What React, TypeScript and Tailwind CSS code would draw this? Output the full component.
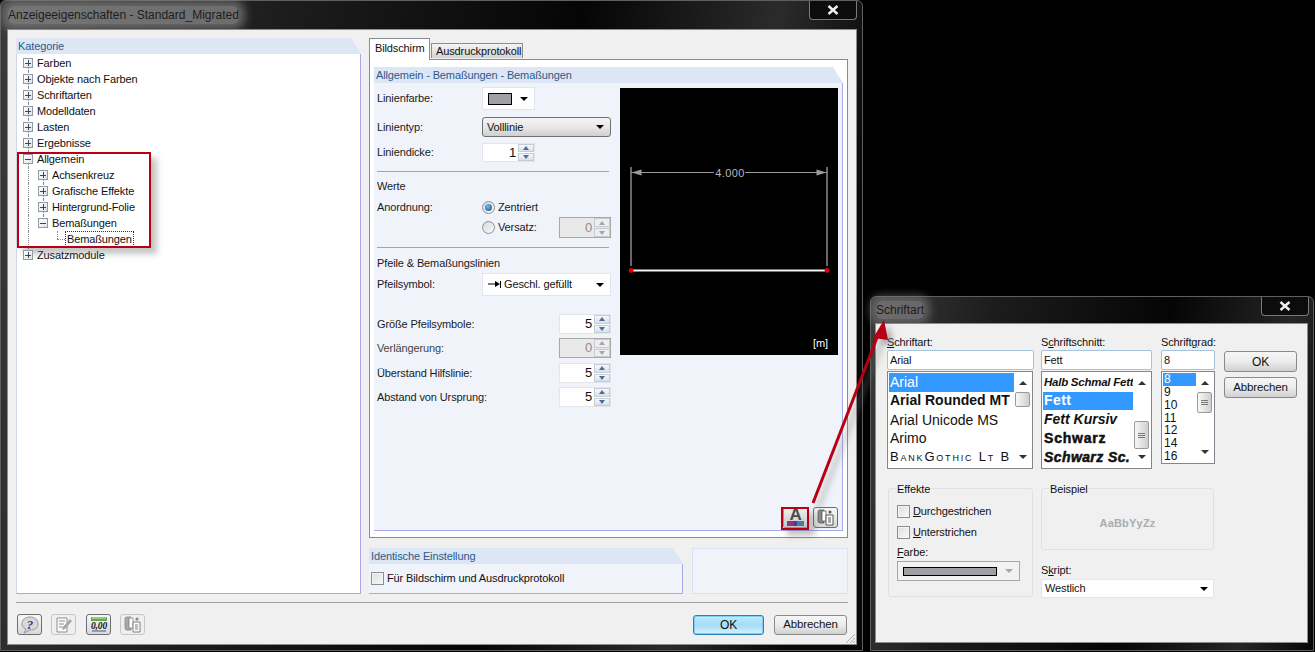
const Plus = ({ open }: { open?: boolean }) => (
  <span className="relative z-10 flex h-[10px] w-[10px] items-center justify-center border border-[#8f9aa8] bg-[linear-gradient(135deg,#ffffff,#dfe3ea)]">
    <span className="absolute h-px w-[6px] bg-[#33475f]" />
    {!open && <span className="absolute h-[6px] w-px bg-[#33475f]" />}
  </span>
);

// one tree row, guide cells are drawn per row
const TreeRow = ({
  label,
  level = 1,
  open,
  first,
  last,
}: {
  label: string;
  level?: number;
  open?: boolean;
  first?: boolean;
  last?: boolean;
}) => (
  <div className="flex h-4 items-center pl-[6px]">
    {level === 2 && <span className="relative h-4 w-[15px] shrink-0"><i className="absolute left-[5px] top-0 h-4 border-l border-dotted border-[#8a8a8a]" /></span>}
    <span className="relative flex h-4 w-[14px] shrink-0 items-center">
      <i className={`absolute left-[5px] border-l border-dotted border-[#8a8a8a] ${first ? "top-2 h-2" : last ? "top-0 h-2" : "top-0 h-4"}`} />
      <Plus open={open} />
    </span>
    <span className="whitespace-nowrap text-[#111]">{label}</span>
  </div>
);

const LeafRow = ({ label }: { label: string }) => (
  <div className="flex h-4 items-center pl-[6px]">
    <span className="relative h-4 w-[15px] shrink-0"><i className="absolute left-[5px] top-0 h-4 border-l border-dotted border-[#8a8a8a]" /></span>
    <span className="relative h-4 w-[21px] shrink-0">
      <i className="absolute left-[19px] top-0 h-2 border-l border-dotted border-[#8a8a8a]" />
      <i className="absolute left-[19px] top-2 w-[8px] border-t border-dotted border-[#8a8a8a]" />
    </span>
    <span className="ml-[6px] border border-dotted border-[#333] px-[1px] leading-[14px] text-[#111]">{label}</span>
  </div>
);

const SpinArrows = ({ disabled }: { disabled?: boolean }) => {
  const c = disabled ? "border-b-[#a8a8a8]" : "border-b-[#4a6d9c]";
  const d = disabled ? "border-t-[#a8a8a8]" : "border-t-[#4a6d9c]";
  return (
    <span className="flex w-[16px] shrink-0 flex-col gap-px">
      <span className={`flex flex-1 items-center justify-center border border-[#c6ccd4] ${disabled ? "bg-[#eeeeee]" : "bg-[linear-gradient(#f6f8fb,#d8e0ea)]"}`}>
        <i className={`h-0 w-0 border-x-[3px] border-b-[4px] border-x-transparent ${c}`} />
      </span>
      <span className={`flex flex-1 items-center justify-center border border-[#c6ccd4] ${disabled ? "bg-[#eeeeee]" : "bg-[linear-gradient(#f6f8fb,#d8e0ea)]"}`}>
        <i className={`h-0 w-0 border-x-[3px] border-t-[4px] border-x-transparent ${d}`} />
      </span>
    </span>
  );
};

const Spin = ({ value, disabled, w = "w-[52px]" }: { value: string; disabled?: boolean; w?: string }) => (
  <span className={`flex h-full border ${w} ${disabled ? "border-[#a8a8a8] bg-[#e9e9e9] text-[#8c8c8c]" : "border-[#e2e6ec] bg-white text-[#111]"}`}>
    <span className="flex flex-1 items-center justify-end pr-[2px] text-[13px]">{value}</span>
    <SpinArrows disabled={disabled} />
  </span>
);

const DropArrow = ({ color = "border-t-black" }: { color?: string }) => (
  <i className={`h-0 w-0 border-x-[4px] border-t-[4px] border-x-transparent ${color}`} />
);

const FormRow = ({ label, className, children }: { label: string; className: string; children?: React.ReactNode }) => (
  <div className={`flex items-center justify-between ${className}`}>
    <span className="whitespace-nowrap text-[#1a1a1a]">{label}</span>
    {children}
  </div>
);

const Radio = ({ on }: { on?: boolean }) => (
  <span className="flex h-[13px] w-[13px] items-center justify-center rounded-full border border-[#8a8f96] bg-[linear-gradient(135deg,#d8d8d8,#fafafa)]">
    {on && <span className="h-[7px] w-[7px] rounded-full bg-[radial-gradient(circle_at_40%_35%,#6cc0f0,#0b4f8c)]" />}
  </span>
);

const Check = () => (
  <span className="h-[13px] w-[13px] shrink-0 border border-[#8a8f96] bg-[linear-gradient(135deg,#dcdcdc,#fbfbfb)] shadow-[inset_0_0_0_1px_#f2f2f2]" />
);

const SectionHead = ({ title }: { title: string }) => (
  <div className="flex h-4 items-center bg-[#dce6f4] pl-[2px] text-[#2d5b8a] [clip-path:polygon(0_0,calc(100%-10px)_0,100%_100%,0_100%)]">
    {title}
  </div>
);

const ToolBtn = ({ dim, children }: { dim?: boolean; children: React.ReactNode }) => (
  <span className={`flex h-[21px] w-[25px] items-center justify-center rounded-[3px] border ${dim ? "border-[#b5b5b5] bg-[#efefef] opacity-70" : "border-[#6d6d6d] bg-[linear-gradient(#f8f8f8,#d8d8d8)]"}`}>
    {children}
  </span>
);

const CopyIcon = () => (
  <svg width="19" height="17" viewBox="0 0 19 17">
    <path d="M2 3q0-2 2-2h4v2H6v9h2v2H4q-2 0-2-2z" fill="#8c8c8c" stroke="#555" strokeWidth="0.8" />
    <path d="M6 2h4v10H6z" fill="#fff" stroke="#666" strokeWidth="0.8" />
    <path d="M10 6h7v10h-7z" fill="#fff" stroke="#555" />
    <path d="M12 9h3M12 11h3M12 13h3" stroke="#555" />
    <circle cx="14" cy="3" r="1.5" fill="#555" />
  </svg>
);

const Scrollbar = ({ thumb, lines = false, top }: { thumb: string; lines?: boolean; top: string }) => (
  <div className="relative flex w-[17px] shrink-0 flex-col items-center justify-between py-[8px]">
    <i className="h-0 w-0 border-x-[4px] border-b-[4px] border-x-transparent border-b-[#333]" />
    <span className={`absolute left-[1px] flex w-[15px] flex-col items-center justify-center gap-px rounded-[2px] border border-[#9a9a9a] bg-[linear-gradient(90deg,#f8f8f8,#cfcfcf)] ${top} ${thumb}`}>
      {lines && <><i className="h-px w-[7px] bg-[#777]" /><i className="h-px w-[7px] bg-[#777]" /><i className="h-px w-[7px] bg-[#777]" /></>}
    </span>
    <i className="h-0 w-0 border-x-[4px] border-t-[4px] border-x-transparent border-t-[#333]" />
  </div>
);

const CloseBtn = ({ className }: { className: string }) => (
  <span className={`absolute top-0 flex h-[19px] w-[48px] items-center justify-center rounded-b-[4px] border border-t-0 border-[#7a7a7a] bg-[#0c0c0c] ${className}`}>
    <svg width="12" height="10" viewBox="0 0 12 10">
      <path d="M1.5 1l9 8M10.5 1l-9 8" stroke="#f0f0f0" strokeWidth="2.4" />
    </svg>
  </span>
);

const DlgBtn = ({ label, primary, className }: { label: string; primary?: boolean; className: string }) => (
  <span className={`flex items-center justify-center rounded-[3px] border text-[#111] ${primary ? "border-[#2b7fb8] bg-[linear-gradient(#bfeafb,#a5dcf6_50%,#d8f2fd)] shadow-[inset_0_0_0_1px_#7fd0f3]" : "border-[#8a8a8a] bg-[linear-gradient(#f6f6f6,#ececec_50%,#d0d0d0)]"} ${className}`}>
    {label}
  </span>
);

const MainWindow = () => (
  <div className="absolute left-0 top-0 flex h-[651px] w-[863px] flex-col rounded-t-[6px] border border-[#5f5f5f] bg-[linear-gradient(100deg,#3a3a3a_0%,#1c1c1c_30%,#050505_60%,#2b2b2b_80%,#080808_92%)]">
    <div className="flex h-[28px] shrink-0 items-center pl-[7px]">
      <span className="rounded-[6px] bg-[#8f8f8f]/70 text-[12px] tracking-normal text-[#1d1d1d] shadow-[0_0_8px_6px_rgba(143,143,143,0.6)]">Anzeigeeigenschaften - Standard_Migrated</span>
    </div>
    <CloseBtn className="right-[5px]" />
    <div className="relative ml-[6px] flex h-[616px] w-[850px] flex-col border border-[#8c8c8c] bg-[#f0f0f0] px-[8px] pt-[8px]">
      <div className="flex h-[556px] gap-[8px]">
        {/* Kategorie tree */}
        <div className="flex w-[345px] flex-col">
          <SectionHead title="Kategorie" />
          <div className="flex-1 border-b border-l border-r border-b-[#a8a8ec] border-l-[#d0d8e8] border-r-[#a8a8ec] bg-white pt-px">
            <TreeRow label="Farben" first />
            <TreeRow label="Objekte nach Farben" />
            <TreeRow label="Schriftarten" />
            <TreeRow label="Modelldaten" />
            <TreeRow label="Lasten" />
            <TreeRow label="Ergebnisse" />
            <TreeRow label="Allgemein" open />
            <TreeRow label="Achsenkreuz" level={2} first />
            <TreeRow label="Grafische Effekte" level={2} />
            <TreeRow label="Hintergrund-Folie" level={2} />
            <TreeRow label="Bemaßungen" level={2} open last />
            <LeafRow label="Bemaßungen" />
            <TreeRow label="Zusatzmodule" last />
          </div>
        </div>

        <div className="flex w-[479px] flex-col">
          {/* tabs */}
          <div className="relative z-10 flex h-[21px] items-end">
            <span className="flex h-[22px] w-[61px] translate-y-px items-start border border-b-0 border-[#898c95] bg-white pl-[5px] pt-px text-[#111]">Bildschirm</span>
            <span className="mb-px ml-px flex h-[15px] w-[92px] items-center border border-b-0 border-[#898c95] bg-[linear-gradient(#f4f4f4,#d4d4d4)] pl-[4px] text-[#111]">Ausdruckprotokoll</span>
          </div>
          <div className="flex h-[479px] flex-col border border-[#898c95] bg-white px-[4px] pb-[6px] pt-[7px]">
            <SectionHead title="Allgemein - Bemaßungen - Bemaßungen" />
            <div className="flex flex-1 flex-col border-b border-r border-[#a8a8ec] bg-[#f0f4fa]">
              <div className="flex flex-1 gap-[9px] pl-[3px] pt-[4px]">
                <div className="flex w-[234px] flex-col">
                  <FormRow label="Linienfarbe:" className="h-[23px] pr-[76px]">
                    <span className="flex h-full w-[53px] items-center justify-between border border-[#e2e6ec] bg-white pl-[5px] pr-[6px]">
                      <i className="h-[12px] w-[24px] border border-black bg-[#a0a0a4]" />
                      <DropArrow />
                    </span>
                  </FormRow>
                  <FormRow label="Linientyp:" className="mt-[7px] h-[20px]">
                    <span className="flex h-full w-[129px] items-center justify-between rounded-[3px] border border-[#707070] bg-[linear-gradient(#f4f4f4,#e8e8e8_50%,#cfcfcf)] pl-[4px] pr-[6px] text-[#111]">
                      Volllinie
                      <DropArrow />
                    </span>
                  </FormRow>
                  <FormRow label="Liniendicke:" className="mt-[6px] h-[19px] pr-[76px]">
                    <Spin value="1" w="w-[53px]" />
                  </FormRow>
                  <div className="mt-[9px] h-px w-[232px] bg-[#a3a3a3]" />
                  <div className="mt-[6px] flex h-4 items-center text-[#1a1a1a]">Werte</div>
                  <div className="mt-[5px] flex h-4 items-center text-[#1a1a1a]">
                    <span className="w-[105px]">Anordnung:</span>
                    <Radio on />
                    <span className="ml-[3px]">Zentriert</span>
                  </div>
                  <div className="mt-[2px] flex h-[21px] items-center text-[#1a1a1a]">
                    <span className="w-[105px]" />
                    <Radio />
                    <span className="ml-[3px] flex-1">Versatz:</span>
                    <Spin value="0" disabled />
                  </div>
                  <div className="mt-[9px] h-px w-[232px] bg-[#a3a3a3]" />
                  <div className="mt-[7px] flex h-4 items-center text-[#1a1a1a]">Pfeile &amp; Bemaßungslinien</div>
                  <FormRow label="Pfeilsymbol:" className="mt-[2px] h-[23px]">
                    <span className="flex h-full w-[129px] items-center justify-between border border-[#e2e6ec] bg-white pl-[5px] pr-[6px] text-[#111]">
                      <span className="flex items-center gap-[2px]">
                        <svg width="14" height="9" viewBox="0 0 14 9"><path d="M0 4h8" stroke="#000" /><path d="M7 1l5 3-5 3z" fill="#000" /><path d="M12.5 1v7" stroke="#000" /></svg>
                        Geschl. gefüllt
                      </span>
                      <DropArrow />
                    </span>
                  </FormRow>
                  <FormRow label="Größe Pfeilsymbole:" className="mt-[18px] h-[20px]"><Spin value="5" /></FormRow>
                  <FormRow label="Verlängerung:" className="mt-[4px] h-[20px] [&>span:first-child]:text-[#444]"><Spin value="0" disabled /></FormRow>
                  <FormRow label="Überstand Hilfslinie:" className="mt-[5px] h-[20px]"><Spin value="5" /></FormRow>
                  <FormRow label="Abstand von Ursprung:" className="mt-[4px] h-[20px]"><Spin value="5" /></FormRow>
                </div>
                {/* preview */}
                <svg className="mt-[1px] shrink-0" width="218" height="267" viewBox="0 0 218 267">
                  <rect width="218" height="267" fill="#000" />
                  <path d="M11 79v99M207 79v99" stroke="#8a8a8a" strokeWidth="1.5" />
                  <path d="M11 84.5h83M125 84.5h82" stroke="#9a9a9a" />
                  <path d="M11.5 84.5l10-3v6zM206.5 84.5l-10-3v6z" fill="#9a9a9a" />
                  <text x="110" y="88.5" textAnchor="middle" fill="#b8b8b8" fontSize="11" fontFamily="Liberation Sans" letterSpacing="0.4">4.000</text>
                  <path d="M11 182.5h196" stroke="#f2f2f2" strokeWidth="2" />
                  <circle cx="11" cy="182.5" r="2.4" fill="#e00000" />
                  <circle cx="207" cy="182.5" r="2.4" fill="#e00000" />
                  <text x="193" y="259" fill="#fff" fontSize="11" fontFamily="Liberation Sans">[m]</text>
                </svg>
              </div>
              <div className="flex justify-end gap-[5px] pb-[2px] pr-[4px]">
                <span className="flex h-[21px] w-[25px] flex-col items-center justify-end rounded-[2px] border border-[#35b6e8] bg-[linear-gradient(#f0f0f0,#c8c8c8)] pb-px">
                  <span className="font-['Liberation_Sans'] text-[17px] font-bold leading-[13px] text-[#4c4c4c]">A</span>
                  <span className="flex h-[5px] w-[18px]">
                    <i className="flex-1 bg-[#6a4a8a]" /><i className="flex-1 bg-[#a0306a]" /><i className="flex-1 bg-[#4040a0]" /><i className="flex-1 bg-[#4a7ab0]" /><i className="flex-1 bg-[#3a8a7a]" />
                  </span>
                </span>
                <ToolBtn><CopyIcon /></ToolBtn>
              </div>
            </div>
          </div>
          {/* bottom boxes */}
          <div className="mt-[10px] flex h-[46px] gap-[9px]">
            <div className="flex w-[314px] flex-col">
              <SectionHead title="Identische Einstellung" />
              <div className="flex flex-1 items-center gap-[3px] border-b border-r border-[#a8a8ec] bg-[#f0f4fa] pl-[2px] text-[#111]">
                <Check />
                Für Bildschirm und Ausdruckprotokoll
              </div>
            </div>
            <div className="w-[156px] border border-[#d8e2f5] bg-[#f0f4fa]" />
          </div>
        </div>
      </div>
      <div className="mt-[8px] h-px bg-[#a3a3a3]" />
      <div className="mt-[11px] flex h-[21px] items-center pl-px">
        <ToolBtn>
          <svg width="20" height="18" viewBox="0 0 20 18">
            <path d="M10 1c5 0 8 3 8 7s-3 6-8 6l-6 3 2-4C3 12 2 10 2 8c0-4 3-7 8-7z" fill="#d8d8d8" stroke="#999" />
            <text x="10" y="13" textAnchor="middle" fontSize="13" fontWeight="700" fontStyle="italic" fontFamily="Liberation Serif" fill="#2b3f8c">?</text>
          </svg>
        </ToolBtn>
        <span className="ml-[9px]">
          <ToolBtn dim>
            <svg width="18" height="16" viewBox="0 0 18 16"><path d="M2 1h10v14H2z" fill="#fff" stroke="#666" /><path d="M4 4h6M4 7h5M4 10h4" stroke="#666" /><path d="M15 2l2 2-7 8-3 1 1-3z" fill="#888" /></svg>
          </ToolBtn>
        </span>
        <span className="ml-[10px]">
          <ToolBtn>
            <svg width="18" height="17" viewBox="0 0 18 17">
              <rect x="1" y="1" width="16" height="4" fill="#66a84a" />
              <path d="M3 1v2M5 1v2M7 1v2M9 1v2M11 1v2M13 1v2M15 1v2" stroke="#cfe8c0" />
              <text x="9" y="13" textAnchor="middle" fontSize="9.5" fontWeight="700" fontStyle="italic" fontFamily="Liberation Serif" fill="#111">0,00</text>
              <path d="M2 15h14" stroke="#3a5f9c" />
            </svg>
          </ToolBtn>
        </span>
        <span className="ml-[9px]">
          <ToolBtn dim><CopyIcon /></ToolBtn>
        </span>
        <span className="ml-auto flex gap-[10px] pr-px">
          <DlgBtn label="OK" primary className="h-[20px] w-[71px] text-[12px]" />
          <DlgBtn label="Abbrechen" className="h-[20px] w-[73px] text-[11.5px]" />
        </span>
      </div>
      <svg className="absolute bottom-0 right-0" width="12" height="12" viewBox="0 0 12 12">
        <path d="M11 2L2 11M11 6l-5 5M11 9l-2 2" stroke="#b0b0b0" />
      </svg>
    </div>
  </div>
);

const ListRow = ({ sel, className, children }: { sel?: boolean; className: string; children: React.ReactNode }) => (
  <div className={`flex items-center overflow-hidden whitespace-nowrap ${sel ? "bg-[#3399ff] text-white" : "text-[#111]"} ${className}`}>{children}</div>
);

const Legend = ({ children }: { children: React.ReactNode }) => (
  <span className="absolute left-[7px] top-[-7px] bg-[#f0f0f0] px-px leading-[14px] text-[#111]">{children}</span>
);

const FontInput = ({ value, className }: { value: string; className: string }) => (
  <div className={`flex h-[20px] items-center rounded-[2px] border border-[#a4c4dc] bg-white pl-[2px] text-[#111] ${className}`}>{value}</div>
);

const FontWindow = () => (
  <div className="absolute left-[870px] top-[296px] flex h-[355px] w-[444px] flex-col rounded-t-[6px] border border-[#5f5f5f] bg-[linear-gradient(100deg,#3a3a3a_0%,#1c1c1c_25%,#050505_60%,#262626_85%,#080808)]">
    <div className="flex h-[26px] shrink-0 items-center pl-[5px]">
      <span className="rounded-[6px] bg-[#8f8f8f]/60 text-[12px] tracking-normal text-[#1d1d1d] shadow-[0_0_8px_6px_rgba(143,143,143,0.5)]">Schriftart</span>
    </div>
    <CloseBtn className="right-[4px]" />
    <div className="ml-[4px] flex h-[320px] w-[433px] flex-col border border-[#8c8c8c] bg-[#f0f0f0] pl-[11px] pt-[11px]">
      <div className="flex">
        <div className="w-[147px]">
          <div className="h-[15px] leading-[14px] text-[#111]"><u>S</u>chriftart:</div>
          <FontInput value="Arial" className="w-[147px]" />
          <div className="mt-px flex h-[98px] w-[146px] border border-[#82878f] bg-white p-px font-['Liberation_Sans'] tracking-normal">
            <div className="flex w-[126px] flex-col text-[14px]">
              <ListRow sel className="h-[19px] pl-[1px]">Arial</ListRow>
              <ListRow className="h-[19px] pl-[1px] font-bold">Arial Rounded MT</ListRow>
              <ListRow className="h-[20px] pl-[1px]">Arial Unicode MS</ListRow>
              <ListRow className="h-[18px] pl-[1px]">Arimo</ListRow>
              <ListRow className="h-[20px] pl-[1px] text-[13px] tracking-[1.8px] [font-variant:small-caps]">BankGothic Lt B</ListRow>
            </div>
            <Scrollbar thumb="h-[15px]" top="top-[19px]" />
          </div>
        </div>
        <div className="ml-[7px] w-[112px]">
          <div className="h-[15px] leading-[14px] text-[#111]">S<u>c</u>hriftschnitt:</div>
          <FontInput value="Fett" className="w-[111px]" />
          <div className="mt-px flex h-[98px] w-[111px] border border-[#82878f] bg-white p-px font-['Liberation_Sans'] tracking-normal">
            <div className="flex w-[91px] flex-col text-[14px]">
              <ListRow className="h-[19px] pl-px text-[11.5px] font-bold italic tracking-[-0.25px]">Halb Schmal Fett</ListRow>
              <ListRow sel className="h-[19px] pl-px font-bold tracking-[0.4px]">Fett</ListRow>
              <ListRow className="h-[19px] pl-px font-bold italic">Fett Kursiv</ListRow>
              <ListRow className="h-[20px] pl-px font-black tracking-[0.8px] [-webkit-text-stroke:0.5px_#111]">Schwarz</ListRow>
              <ListRow className="h-[19px] pl-px font-black italic tracking-[0.4px] [-webkit-text-stroke:0.5px_#111]">Schwarz Sc.</ListRow>
            </div>
            <Scrollbar thumb="h-[28px]" lines top="top-[48px]" />
          </div>
        </div>
        <div className="ml-[8px] w-[54px]">
          <div className="h-[15px] leading-[14px] text-[#111]">Schrift<u>g</u>rad:</div>
          <FontInput value="8" className="w-[54px]" />
          <div className="mt-px flex h-[93px] w-[54px] border border-[#82878f] bg-white p-px text-[12px] tracking-normal">
            <div className="flex w-[33px] flex-col">
              <ListRow sel className="h-[13px] pl-px">8</ListRow>
              <ListRow className="h-[13px] pl-px">9</ListRow>
              <ListRow className="h-[13px] pl-px">10</ListRow>
              <ListRow className="h-[13px] pl-px">11</ListRow>
              <ListRow className="h-[13px] pl-px">12</ListRow>
              <ListRow className="h-[13px] pl-px">14</ListRow>
              <ListRow className="h-[13px] pl-px">16</ListRow>
            </div>
            <Scrollbar thumb="h-[21px]" lines top="top-[19px]" />
          </div>
        </div>
        <div className="ml-[9px] flex flex-col gap-[5px] pt-[16px]">
          <DlgBtn label="OK" className="h-[21px] w-[73px] text-[12px]" />
          <DlgBtn label="Abbrechen" className="h-[21px] w-[73px] text-[11.5px]" />
        </div>
      </div>
      <div className="mt-[19px] flex">
        <div className="relative ml-px h-[109px] w-[145px] rounded-[3px] border border-[#dde1e6]">
          <Legend>Effekte</Legend>
          <div className="ml-[8px] mt-[16px] flex h-[13px] items-center gap-[3px] text-[#111]"><Check /><span><u>D</u>urchgestrichen</span></div>
          <div className="ml-[8px] mt-[8px] flex h-[13px] items-center gap-[3px] text-[#111]"><Check /><span><u>U</u>nterstrichen</span></div>
          <div className="ml-[8px] mt-[6px] h-[15px] leading-[15px] text-[#111]"><u>F</u>arbe:</div>
          <div className="ml-[8px] mt-[1px] flex h-[20px] w-[123px] items-center justify-between border border-[#a8a8a8] bg-[#f2f2f2] pl-[5px] pr-[6px]">
            <i className="h-[9px] w-[94px] border border-black bg-[#a0a0a4]" />
            <DropArrow color="border-t-[#a8a8a8]" />
          </div>
        </div>
        <div className="ml-[8px] flex w-[173px] flex-col">
          <div className="relative flex h-[62px] items-center justify-center rounded-[3px] border border-[#dde1e6] pt-[8px] text-[#a8adb2]">
            <Legend>Beispiel</Legend>
            <span className="font-bold tracking-[0.2px]">AaBbYyZz</span>
          </div>
          <div className="mt-[13px] h-[16px] leading-[15px] text-[#111]">S<u>k</u>ript:</div>
          <div className="flex h-[19px] items-center justify-between border border-[#e2e6ec] bg-white pl-[3px] pr-[5px] text-[#111]">
            Westlich
            <DropArrow />
          </div>
        </div>
      </div>
    </div>
  </div>
);

const App = () => {
  return (
    <div className="relative h-[652px] w-[1315px] overflow-hidden bg-black font-['Liberation_Sans',sans-serif] text-[11px] tracking-[-0.12px]">
      <MainWindow />
      <FontWindow />
      {/* annotations */}
      <div className="absolute left-[17px] top-[152px] h-[96px] w-[134px] border-2 border-[#b80014] shadow-[6px_6px_6px_rgba(90,90,90,0.35)]" />
      <div className="absolute left-[781px] top-[507px] h-[23px] w-[28px] border-2 border-[#b80014] shadow-[6px_6px_6px_rgba(90,90,90,0.35)]" />
      <svg className="absolute left-0 top-0 drop-shadow-[5px_5px_3px_rgba(120,120,120,0.6)]" width="1315" height="652" viewBox="0 0 1315 652">
        <path d="M813 503L878 335" stroke="#b80014" strokeWidth="3" />
        <path d="M884 320L873 338L888 340z" fill="#b80014" />
      </svg>
    </div>
  );
};

export default App;
